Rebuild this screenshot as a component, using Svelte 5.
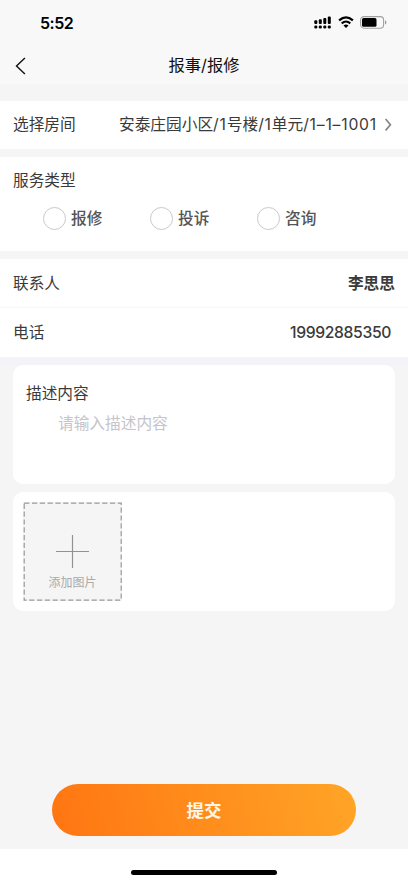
<script>
    let room = '安泰庄园小区/1号楼/1单元/1–1–1001';
    // split off latin runs, they are set a little wider
    let roomParts = room.match(/[\/\d–]+|[^\/\d–]+/g);
    let types = ['报修', '投诉', '咨询'];
    let selected = $state('');
    let content = $state('');
</script>

<div class="page">
    <div class="status-bar">
        <span class="time">5:52</span>
        <div class="status-icons">
            <svg width="18" height="13" viewBox="0 0 18 13">
                <rect x="0.3" y="4.2" width="3" height="3.8" rx="1" />
                <rect x="4.8" y="3.2" width="3" height="4.8" rx="1" />
                <rect x="9.3" y="2" width="3" height="6" rx="1" />
                <rect x="13.8" y="0.4" width="3" height="7.6" rx="1" />
                <rect x="0.3" y="9.4" width="3" height="3" rx="1.2" />
                <rect x="4.8" y="9.4" width="3" height="3" rx="1.2" />
                <rect x="9.3" y="9.4" width="3" height="3" rx="1.2" />
                <rect x="13.8" y="9.4" width="3" height="3" rx="1.2" />
            </svg>
            <svg class="wifi" width="16" height="12" viewBox="0 0 16 12">
                <path d="M1.1 4.3 Q8 -1.6 14.9 4.3" fill="none" stroke="#000" stroke-width="2.3" />
                <path d="M3.7 7.4 Q8 3.6 12.3 7.4" fill="none" stroke="#000" stroke-width="2.1" />
                <path d="M8 12 L5.5 9.4 Q8 7.4 10.5 9.4 Z" />
            </svg>
            <svg class="battery" width="27" height="13" viewBox="0 0 27 13">
                <rect x="0.6" y="0.6" width="23" height="11.6" rx="3.4" fill="none" stroke="#a0a0a0" stroke-width="1.1" />
                <rect x="2" y="2.1" width="14.5" height="8.7" rx="1.6" />
                <path d="M25 4.3 Q26.4 5 26.4 6.4 Q26.4 7.8 25 8.5 Z" fill="#999" />
            </svg>
        </div>
    </div>

    <div class="nav">
        <svg class="back" width="11" height="18" viewBox="0 0 11 18">
            <path d="M9.9 1 L1.5 9 L9.9 17" fill="none" stroke="#111" stroke-width="1.4" />
        </svg>
        <span class="title">报事/报修</span>
    </div>

    <div class="row room">
        <span>选择房间</span>
        <span class="room-name">{#each roomParts as part}<span class:latin={/\d/.test(part) || part === '/'}>{part}</span>{/each}</span>
        <svg width="9" height="14" viewBox="0 0 9 14">
            <path d="M1.6 1 L6.4 6.7 L1.6 12.4" fill="none" stroke="#858585" stroke-width="1.7" />
        </svg>
    </div>

    <div class="service">
        <div class="label">服务类型</div>
        <div class="types">
            {#each types as type}
                <button class="type" onclick={() => (selected = type)}>
                    <span class="radio" class:checked={selected === type}></span>
                    <span>{type}</span>
                </button>
            {/each}
        </div>
    </div>

    <div class="row contact">
        <span>联系人</span>
        <span class="value">李思思</span>
    </div>
    <div class="row phone">
        <span>电话</span>
        <span class="value number">19992885350</span>
    </div>
    <div class="band"></div>

    <div class="card">
        <div class="label">描述内容</div>
        <textarea bind:value={content} placeholder="请输入描述内容"></textarea>
    </div>

    <div class="card upload">
        <button class="add">
            <svg class="outline" width="99" height="99" viewBox="0 0 99 99">
                <rect x="1.2" y="1.2" width="97" height="97" fill="none" stroke="#999" stroke-width="1.2" stroke-dasharray="5.2 2.6" />
            </svg>
            <svg width="33" height="33" viewBox="0 0 33 33">
                <path d="M16.5 0 V33 M0 16.5 H33" fill="none" stroke="#929292" stroke-width="1.2" />
            </svg>
            <span>添加图片</span>
        </button>
    </div>

    <button class="submit">提交</button>

    <div class="bottom">
        <div class="indicator"></div>
    </div>
</div>

<style>
:global(body) {
    margin: 0;
}
.page {
    display: flex;
    flex-direction: column;
    width: 408px;
    height: 883px;
    overflow: hidden;
    background-color: #f5f5f5;
    color: #3a3a3a;
    font-family: Inter, "Noto Sans CJK SC", sans-serif;
    font-size: 15.7px;
    line-height: 24px;
}
button {
    padding: 0;
    border: none;
    background: none;
    color: inherit;
    font: inherit;
}
svg {
    display: block;
    flex: none;
}
.status-bar {
    display: flex;
    justify-content: space-between;
    height: 44px;
    padding: 0 21px 0 40px;
    box-sizing: border-box;
    background-color: #f8f8f8;
}
.time {
    margin-top: 11px;
    color: #000;
    font-size: 16px;
    font-weight: 600;
    letter-spacing: -0.5px;
}
.status-icons {
    display: flex;
    margin-top: 16px;
}
.wifi {
    margin-left: 6px;
}
.battery {
    margin-left: 6px;
}
.nav {
    display: flex;
    align-items: center;
    height: 40px;
    padding: 0 16px 0 15px;
    box-sizing: border-box;
    background-color: #f8f8f8;
}
.back {
    margin-top: 4px;
}
.title {
    flex: 1;
    margin-right: 10px;
    padding-top: 2px;
    color: #111;
    text-align: center;
    font-size: 16.3px;
}
.row {
    display: flex;
    align-items: center;
    justify-content: space-between;
    padding: 1px 13px 0;
    box-sizing: border-box;
    background-color: #fff;
}
.room {
    height: 48px;
    margin-top: 16.5px;
    padding-right: 15px;
}
.room-name {
    margin-left: auto;
    margin-right: 7px;
}
.latin {
    letter-spacing: 0.8px;
}
.service {
    height: 94px;
    margin-top: 8px;
    padding: 12.5px 13px 0;
    box-sizing: border-box;
    background-color: #fff;
}
.types {
    display: flex;
    gap: 48px;
    margin: 13px 0 0 30px;
}
.type {
    display: flex;
    align-items: center;
    gap: 5px;
    width: 59px;
    color: #555;
    font-weight: 500;
    white-space: nowrap;
}
.type span:last-child {
    padding-top: 1px;
}
.radio {
    flex: none;
    width: 23px;
    height: 23px;
    border: 1px solid #c9c9c9;
    border-radius: 50%;
    box-sizing: border-box;
}
.radio.checked {
    border: 7px solid #ff7a14;
}
.contact {
    height: 49px;
    margin-top: 8.5px;
    border-bottom: 1px solid #f7f7f7;
}
.phone {
    height: 49px;
    padding-right: 17px;
}
.value {
    font-weight: 600;
}
.number {
    font-weight: 500;
    letter-spacing: -0.36px;
}
.band {
    flex: none;
    height: 8px;
    background-color: #f4f4f8;
}
.card {
    height: 119px;
    margin: 0 13px 7.5px;
    padding: 16.5px 13px 0;
    box-sizing: border-box;
    border-radius: 10px;
    background-color: #fff;
}
textarea {
    display: block;
    width: 300px;
    height: 60px;
    margin: 6px 0 0 32px;
    padding: 0;
    border: none;
    outline: none;
    resize: none;
    background: none;
    font: inherit;
}
textarea::placeholder {
    color: #c4c4ca;
}
.upload {
    padding: 10px;
}
.add {
    position: relative;
    display: flex;
    flex-direction: column;
    align-items: center;
    width: 99px;
    height: 99px;
    padding-top: 33px;
    background-color: #f5f5f5;
    color: #aaa;
    font-size: 12px;
    line-height: 18px;
}
.add span {
    margin-top: 6px;
}
.outline {
    position: absolute;
    top: 0;
    left: 0;
}
.submit {
    align-self: center;
    width: 304px;
    height: 52px;
    margin-top: auto;
    margin-bottom: 13px;
    padding-top: 1px;
    border-radius: 26px;
    background: linear-gradient(75deg, #ff7512, #ffa526);
    color: #fff8e8;
    font-size: 17.5px;
    font-weight: 600;
}
.bottom {
    display: flex;
    justify-content: center;
    height: 34px;
    background-color: #fff;
}
.indicator {
    width: 146px;
    height: 5px;
    margin-top: 21px;
    border-radius: 3px;
    background-color: #000;
}
</style>
